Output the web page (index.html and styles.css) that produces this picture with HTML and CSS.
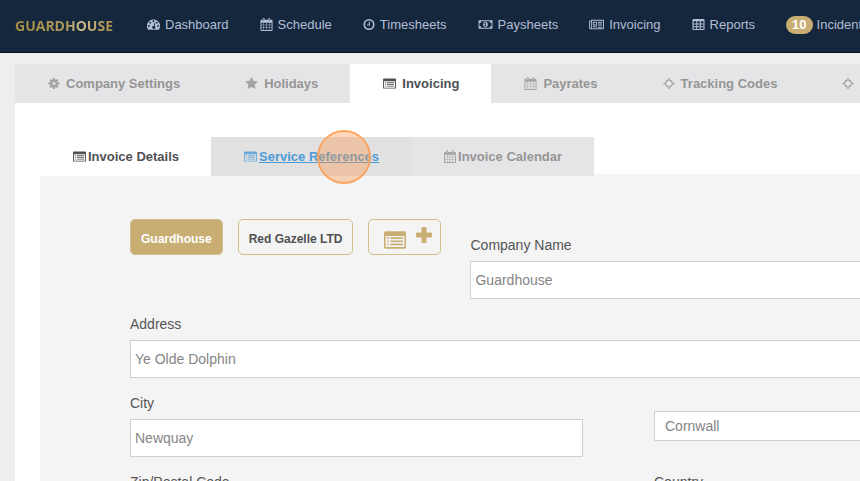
FILE: index.html
```html
<!DOCTYPE html>
<html lang="en">
<head>
  <meta charset="UTF-8" />
  <title>Guardhouse – Invoice Settings</title>
  <meta name="viewport" content="width=device-width, initial-scale=1.0" />
  <link rel="stylesheet" href="styles.css">
</head>
<body>
  <!-- Icon set -->
  <svg class="icon-set" aria-hidden="true">
    <symbol id="dashboard" viewBox="0 0 14 14">
      <path fill-rule="evenodd" d="M7 1.500a7 7 0 0 0-5.900 10.800q.2.3.5.3h10.800q.3 0 .5-.3A7 7 0 0 0 7 1.500zM2 7.500a1 1 0 1 1 0 2 1 1 0 0 1 0-2zM3.500 4a1 1 0 1 1 0 2 1 1 0 0 1 0-2zM7 2.500a1 1 0 1 1 0 2 1 1 0 0 1 0-2zM10.500 4a1 1 0 1 1 0 2 1 1 0 0 1 0-2zM12 7.500a1 1 0 1 1 0 2 1 1 0 0 1 0-2zM8.100 5.400l.8.2-.8 3.200a1.600 1.600 0 1 1-.9-.2z"/>
    </symbol>
    <symbol id="calendar" viewBox="0 0 13 14">
      <path fill-rule="evenodd" d="M1 2h1.500V1Q2.500 0 3.500 0T4.500 1v1h4V1q0-1 1-1t1 1v1H12q1 0 1 1v10q0 1-1 1H1q-1 0-1-1V3q0-1 1-1zM1 5v2.200h2.200V5zm2.700 0v2.200h2.500V5zm3 0v2.200h2.600V5zm3.100 0v2.200H12V5zM1 7.700v2.500h2.200V7.700zm2.700 0v2.500h2.500V7.700zm3 0v2.500h2.600V7.700zm3.100 0v2.500H12V7.700zM1 10.700V13h2.200v-2.300zm2.700 0V13h2.500v-2.300zm3 0V13h2.600v-2.300zm3.100 0V13H12v-2.300zM3.200 1v2h.6V1zm6 0v2h.6V1z"/>
    </symbol>
    <symbol id="clock" viewBox="0 0 12 14">
      <circle cx="6" cy="7" r="5.100" fill="none" stroke="currentColor" stroke-width="1.800"/>
      <path d="M5.800 4H7v4H3.800V6.900h2z"/>
    </symbol>
    <symbol id="money" viewBox="0 0 15 14">
      <path fill-rule="evenodd" d="M0 2.500h15v9H0zM3 3.500a2 2 0 0 1-2 2v3a2 2 0 0 1 2 2h9a2 2 0 0 1 2-2v-3a2 2 0 0 1-2-2z"/>
      <path fill-rule="evenodd" d="M7.500 4C9 4 10 5.300 10 7s-1 3-2.500 3S5 8.700 5 7s1-3 2.500-3zM7.200 5.200L6.200 6l.4.600.5-.3v1.800h-.8v.7h2.400v-.7H8V5.200z"/>
    </symbol>
    <symbol id="newspaper" viewBox="0 0 16 14">
      <path fill-rule="evenodd" d="M2 2h14v9q0 1-1 1H1.500Q0 12 0 10.500V3h2zM1 4v6.500q0 .5.500.5t.5-.5V4zm2-1v8h12V3z"/>
      <path fill-rule="evenodd" d="M4 4h4.500v4H4zm1 1v2h2.500V5zM9.500 4H14v1H9.500zm0 2H14v1H9.500zm0 2H14v1H9.500zM4 9h4.500v1H4zm5.500.8H14v.7H9.500z"/>
    </symbol>
    <symbol id="table" viewBox="0 0 13 14">
      <path fill-rule="evenodd" d="M1 1h11q1 0 1 1v10q0 1-1 1H1q-1 0-1-1V2q0-1 1-1zM1.200 3.500v2.300h2.900V3.500zm4 0v2.300h2.700V3.500zm3.800 0v2.300h2.900V3.500zM1.200 6.900v2h2.900v-2zm4 0v2h2.700v-2zm3.800 0v2h2.900v-2zM1.200 10v1.900h2.900V10zm4 0v1.900h2.700V10zM9 10v1.900h2.900V10z"/>
    </symbol>
    <symbol id="cog" viewBox="0 0 12 14">
      <circle cx="6" cy="7" r="3" fill="none" stroke="currentColor" stroke-width="2.600"/>
      <path d="M5 1h2l.4 2.500H4.600zM5 13h2l.4-2.500H4.600zM0 6v2l2.500.4V5.600zM12 6v2l-2.500.4V5.600zM1.100 3.500l1.400-1.400 2 1.400-2 2zM10.900 3.500L9.500 2.100l-2 1.400 2 2zM1.100 10.500l1.400 1.400 2-1.400-2-2zM10.900 10.500l-1.400 1.400-2-1.400 2-2z"/>
    </symbol>
    <symbol id="star" viewBox="0 0 1792 1792">
      <path d="M1728 647q0 22-26 48l-363 354 86 500q1 7 1 20 0 21-10.500 35.500t-30.500 14.500q-19 0-40-12l-449-236-449 236q-22 12-40 12-21 0-31.500-14.500t-10.500-35.500q0-6 2-20l86-500-364-354q-25-27-25-48 0-37 56-46l502-73 225-455q19-41 49-41t49 41l225 455 502 73q56 9 56 46z"/>
    </symbol>
    <symbol id="list" viewBox="0 0 14 14">
      <path fill-rule="evenodd" d="M1 1.500h12q1 0 1 1v9q0 1-1 1H1q-1 0-1-1v-9q0-1 1-1zM1 4.500v6.700q0 .3.300.3h11.400q.3 0 .3-.3V4.500z"/>
      <path d="M2 5.300h1v1H2zm0 2h1v1H2zm0 2h1v1H2zM4 5.300h8v1H4zm0 2h8v1H4zm0 2h8v1H4z"/>
    </symbol>
    <symbol id="crosshairs" viewBox="0 0 12 14">
      <path d="M5.300 4.300A2.900 2.900 0 0 0 3.300 6.300M3.300 7.700a2.900 2.900 0 0 0 2 2M6.700 9.700a2.900 2.900 0 0 0 2-2M8.700 6.300a2.900 2.900 0 0 0-2-2" transform="translate(-1.800 -2.100) scale(1.300)" fill="none" stroke="currentColor" stroke-width="1.300"/>
      <path d="M5.200 1h1.600v3H5.200zM5.200 10h1.600v3H5.200zM0 6.200h3v1.600H0zM9 6.200h3v1.600H9z"/>
    </symbol>
    <symbol id="plus" viewBox="0 0 16 16">
      <path d="M6.500 0h3q1 0 1 1v4.500H15q1 0 1 1v3q0 1-1 1h-4.500V15q0 1-1 1h-3q-1 0-1-1v-4.500H1q-1 0-1-1v-3q0-1 1-1h4.500V1q0-1 1-1z"/>
    </symbol>
  </svg>

  <!-- Top navigation -->
  <header class="navbar">
    <a class="logo" href="#">GUARDHOUSE</a>
    <nav class="nav-links">
      <a href="#"><svg class="icon"><use href="#dashboard"/></svg>Dashboard</a>
      <a href="#"><svg class="icon"><use href="#calendar"/></svg>Schedule</a>
      <a href="#"><svg class="icon narrow"><use href="#clock"/></svg>Timesheets</a>
      <a href="#"><svg class="icon wide"><use href="#money"/></svg>Paysheets</a>
      <a href="#"><svg class="icon wide"><use href="#newspaper"/></svg>Invoicing</a>
      <a href="#"><svg class="icon"><use href="#table"/></svg>Reports</a>
      <a class="counted" href="#"><span class="badge">10</span>Incidents</a>
    </nav>
  </header>

  <main class="page">
    <!-- Settings tabs -->
    <nav class="tabs">
      <a class="tab" href="#"><svg class="icon narrow"><use href="#cog"/></svg>Company Settings</a>
      <a class="tab" href="#"><svg class="icon"><use href="#star"/></svg>Holidays</a>
      <a class="tab active" href="#"><svg class="icon"><use href="#list"/></svg>Invoicing</a>
      <a class="tab" href="#"><svg class="icon"><use href="#calendar"/></svg>Payrates</a>
      <a class="tab" href="#"><svg class="icon narrow"><use href="#crosshairs"/></svg>Tracking Codes</a>
      <a class="tab" href="#"><svg class="icon narrow"><use href="#crosshairs"/></svg>References</a>
    </nav>

    <div class="content">
      <!-- Invoicing sub tabs -->
      <nav class="subtabs">
        <a class="subtab active" href="#"><svg class="icon"><use href="#list"/></svg><span>Invoice Details</span></a>
        <a class="subtab hovered" href="#"><svg class="icon"><use href="#list"/></svg><span>Service References</span><i class="pointer"></i></a>
        <a class="subtab" href="#"><svg class="icon narrow"><use href="#calendar"/></svg><span>Invoice Calendar</span></a>
      </nav>

      <form class="panel">
        <div class="company-row">
          <div class="companies">
            <button type="button" class="company selected">Guardhouse</button>
            <button type="button" class="company">Red Gazelle LTD</button>
            <button type="button" class="company add" aria-label="Add company">
              <svg class="list-icon"><use href="#list"/></svg>
              <svg class="plus-icon"><use href="#plus"/></svg>
            </button>
          </div>
          <div class="field">
            <label for="company">Company Name</label>
            <input type="text" id="company" value="Guardhouse">
          </div>
        </div>

        <div class="field">
          <label for="address">Address</label>
          <input type="text" id="address" value="Ye Olde Dolphin">
        </div>

        <div class="columns">
          <div class="field">
            <label for="city">City</label>
            <input type="text" id="city" value="Newquay">
          </div>
          <div class="field unlabelled">
            <select aria-label="County">
              <option>Cornwall</option>
              <option>Devon</option>
            </select>
          </div>
          <div class="field">
            <label for="zip">Zip/Postal Code</label>
            <input type="text" id="zip">
          </div>
          <div class="field">
            <label for="country">Country</label>
            <input type="text" id="country">
          </div>
        </div>
      </form>
    </div>
  </main>
</body>
</html>
```

FILE: styles.css
```css
/* ------------------------------
   RESET & BASE STYLES
------------------------------- */
* {
  margin: 0;
  padding: 0;
  box-sizing: border-box;
}
body {
  height: 100vh;
  overflow: hidden;
  font-family: 'Liberation Sans', Arial, sans-serif;
  font-size: 13px;
  background: #eeeeee;
  color: #555555;
}
a {
  color: inherit;
  text-decoration: none;
}
.icon-set {
  display: none;
}
.icon {
  flex: none;
  width: 13px;
  height: 13px;
  fill: currentColor;
}
.icon.narrow {
  width: 12px;
}
.icon.wide {
  width: 15px;
}

/* ------------------------------
   TOP NAVIGATION
------------------------------- */
.navbar {
  display: flex;
  align-items: center;
  height: 53px;
  padding: 0 15px 3px;
  background: #15273d;
  border-bottom: 1px solid #08101f;
  white-space: nowrap;
}
.logo {
  flex: none;
  width: 132px;
  padding-top: 2px;
  font-family: 'Open Sans', sans-serif;
  font-size: 14px;
  font-weight: 700;
  line-height: 20px;
  color: transparent;
  background: linear-gradient(90deg, #a88d45, #b09a5c 40%, #cdbb8c 50%, #a88d45 75%);
  -webkit-background-clip: text;
  background-clip: text;
}
.nav-links {
  display: flex;
  gap: 31px;
  color: #b3bed6;
}
.nav-links a {
  display: flex;
  align-items: center;
  gap: 5px;
}
.nav-links .counted {
  gap: 4px;
}
.badge {
  padding: 0 6px;
  border-radius: 9px;
  background: #c9ae73;
  color: #ffffff;
  font-weight: 700;
  line-height: 18px;
}

/* ------------------------------
   SETTINGS TABS
------------------------------- */
.page {
  min-width: 1237px;
  padding: 11px 15px;
}
.tabs {
  display: flex;
  background: #e5e5e7;
}
.tab,
.subtab {
  display: flex;
  align-items: center;
  height: 39px;
  padding: 0 32px 0 33px;
  font-weight: 700;
  color: #959595;
  white-space: nowrap;
}
.tab {
  gap: 6px;
}
.tab .icon,
.subtab .icon {
  opacity: 0.8;
}
.tab.active,
.subtab.active {
  background: #ffffff;
  color: #505055;
}
.tab.active .icon,
.subtab.active .icon {
  opacity: 1;
}

/* ------------------------------
   SUB TABS
------------------------------- */
.content {
  padding: 34px 25px;
  background: #ffffff;
}
.subtabs {
  display: flex;
  position: relative;
  margin-bottom: -2px;
}
.subtab {
  gap: 2px;
  background: #e5e5e7;
}
.subtab.hovered {
  position: relative;
  background: #e1e1e1;
  color: #4d9bd6;
}
.subtab.hovered span {
  text-decoration: underline;
}
/* click highlight */
.pointer {
  position: absolute;
  top: -7px;
  right: 40px;
  width: 54px;
  height: 54px;
  border: 2px solid #fba462;
  border-radius: 50%;
  background: rgba(255, 150, 70, 0.37);
}

/* ------------------------------
   INVOICE DETAILS FORM
------------------------------- */
.panel {
  padding: 45px 90px;
  background: #f4f4f4;
  font-size: 14px;
}
.company-row {
  display: flex;
  gap: 29px;
}
.company-row .field {
  flex: 1;
  margin-top: 16px;
}
.companies {
  display: flex;
  align-items: flex-start;
  gap: 15px;
}
.company {
  height: 36px;
  padding: 3px 10px 0;
  border: 1px solid #d3bf8e;
  border-radius: 5px;
  background: transparent;
  color: #505050;
  font: 700 12px 'Liberation Sans', Arial, sans-serif;
}
.company.selected {
  background: #c9ae73;
  color: #ffffff;
}
.company.add {
  display: flex;
  align-items: flex-start;
  gap: 10px;
  padding: 7px 8px 0 15px;
  fill: #c9ae73;
}
.list-icon {
  width: 22px;
  height: 22px;
  margin-top: 2px;
}
.plus-icon {
  width: 16px;
  height: 16px;
}
.field {
  margin-bottom: 15px;
}
.field label {
  display: block;
  margin-bottom: 6px;
  line-height: 20px;
}
.field input,
.field select {
  display: block;
  width: 100%;
  height: 38px;
  padding: 0 4px;
  border: 1px solid #d0d0d0;
  border-radius: 0;
  background: #ffffff;
  color: #858585;
  font: 14px 'Liberation Sans', Arial, sans-serif;
}
.field select {
  height: 30px;
  padding: 0 10px;
  appearance: none;
}
.field.unlabelled {
  padding-top: 18px;
}
.columns {
  display: grid;
  grid-template-columns: 1fr 1fr;
  column-gap: 71px;
}
```
